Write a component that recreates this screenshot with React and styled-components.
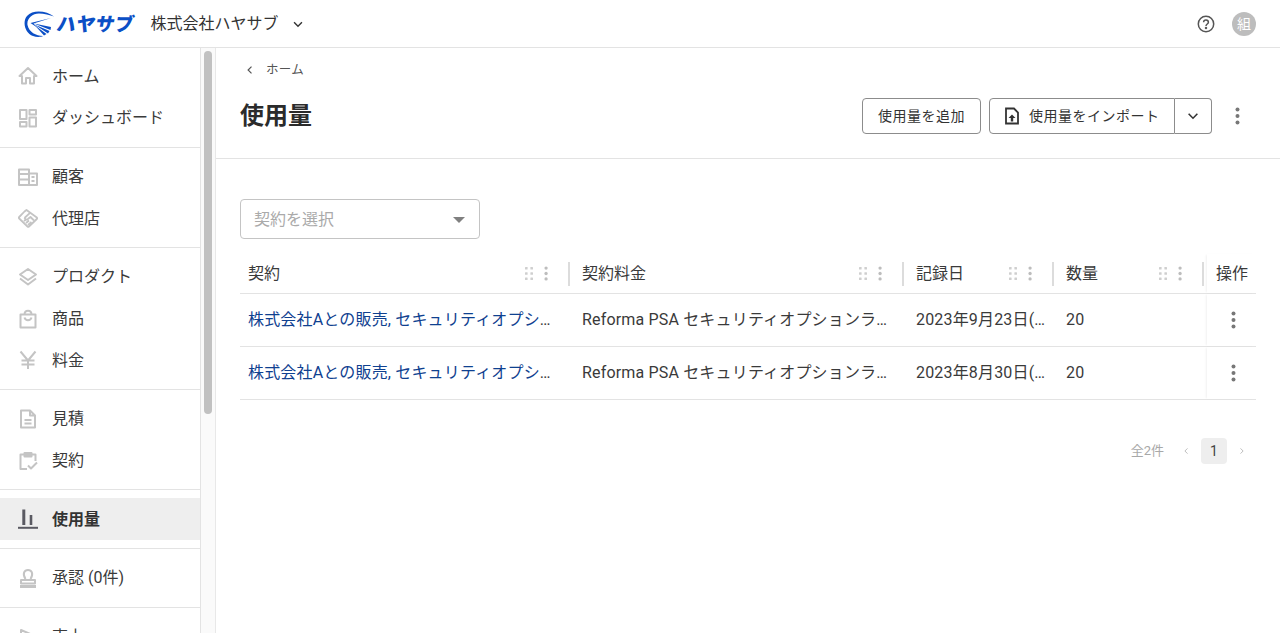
import React from 'react';
import styled, { createGlobalStyle } from 'styled-components';

const GlobalStyle = createGlobalStyle`
  html, body {
    margin: 0;
    height: 100%;
    overflow: hidden;
    background: #fff;
  }
  body {
    font-family: Roboto, "Noto Sans CJK JP", sans-serif;
    line-height: 24px;
    color: #333;
  }
  * {
    box-sizing: border-box;
  }
`;

const Page = styled.div`
  height: 633px;
  display: flex;
  flex-direction: column;
  overflow: hidden;
`;

const Header = styled.header`
  height: 48px;
  flex: none;
  display: flex;
  align-items: center;
  padding: 0 24px;
  border-bottom: 1px solid #e3e3e3;
`;

const Logo = styled.div`
  display: flex;
  align-items: center;
  color: #0b4fc6;
  width: 126.5px;
`;

const LogoText = styled.span`
  font-size: 19px;
  font-weight: 900;
  line-height: 1;
  margin: 2px 0 0 1px;
  letter-spacing: 0.3px;
  transform: skewX(-10deg);
`;

const Company = styled.div`
  display: flex;
  align-items: center;
  font-size: 16px;
  color: #333;
  gap: 12px;
`;

const HeaderRight = styled.div`
  margin-left: auto;
  display: flex;
  align-items: center;
  gap: 17px;
`;

const Avatar = styled.div`
  width: 24px;
  height: 24px;
  border-radius: 50%;
  background: #bdbdbd;
  color: #fff;
  font-size: 14px;
  display: flex;
  align-items: center;
  justify-content: center;
`;

const Body = styled.div`
  flex: 1;
  display: flex;
  min-height: 0;
`;

const Sidebar = styled.aside`
  width: 216px;
  flex: none;
  display: flex;
  border-right: 1px solid #e8e8e8;
  overflow: hidden;
`;

const Nav = styled.nav`
  width: 201px;
  flex: none;
  border-right: 1px solid #e3e3e3;
  margin-top: -0.5px;
`;

const NavGroup = styled.div`
  padding: 8px 0;
  border-bottom: 1px solid #e3e3e3;
`;

const NavItem = styled.a`
  height: 41.67px;
  display: flex;
  align-items: center;
  padding: 1px 0 0 18px;
  gap: 14px;
  font-size: 16px;
  font-weight: ${(p) => (p.$active ? 700 : 400)};
  color: ${(p) => (p.$active ? '#333' : '#3a3a3a')};
  background: ${(p) => (p.$active ? '#eeeeee' : 'transparent')};
  svg {
    color: ${(p) => (p.$active ? '#5a5a62' : '#c4c4c4')};
    flex: none;
    margin-top: -1px;
  }
`;

const ScrollTrack = styled.div`
  flex: 1;
  background: #fafafa;
  padding: 3px 3px 0 3px;
`;

const ScrollThumb = styled.div`
  height: 363px;
  border-radius: 4px;
  background: #c1c1c1;
`;

const Main = styled.main`
  flex: 1;
  min-width: 0;
`;

const PageHead = styled.div`
  height: 111px;
  padding: 12px 24px 0;
  border-bottom: 1px solid #e3e3e3;
`;

const Breadcrumb = styled.div`
  display: flex;
  align-items: center;
  height: 20px;
  gap: 10px;
  font-size: 12.5px;
  letter-spacing: 0.25px;
  color: #555;
  padding-left: 4px;
`;

const TitleRow = styled.div`
  display: flex;
  align-items: center;
  margin-top: 18px;
  height: 36px;
`;

const Title = styled.h1`
  margin: 0;
  font-size: 24px;
  font-weight: 700;
  color: #2b2b2b;
  line-height: 36px;
`;

const Actions = styled.div`
  margin-left: auto;
  display: flex;
  align-items: center;
  margin-right: 9px;
`;

const Button = styled.button`
  height: 36px;
  display: flex;
  align-items: center;
  gap: 10px;
  padding: 0 15px;
  background: #fff;
  border: 1px solid #8c8c8c;
  border-radius: 4px;
  font: inherit;
  font-size: 14px;
  letter-spacing: 0.5px;
  white-space: nowrap;
  color: #333;
`;

const ButtonGroup = styled.div`
  display: flex;
  margin-left: 8px;
`;

const ImportButton = styled(Button)`
  border-radius: 4px 0 0 4px;
  width: 186px;
  padding: 0 0 0 14px;
  gap: 9px;
`;

const CaretButton = styled(Button)`
  border-radius: 0 4px 4px 0;
  border-left: none;
  width: 37px;
  padding: 0;
  justify-content: center;
`;

const KebabBox = styled.div`
  width: 20px;
  display: flex;
  justify-content: center;
  margin-left: 15px;
`;

const Content = styled.div`
  padding: 40px 24px 0;
`;

const Select = styled.div`
  width: 240px;
  height: 40px;
  border: 1px solid #c4c4c4;
  border-radius: 4px;
  display: flex;
  align-items: center;
  justify-content: space-between;
  padding: 1px 14px 0 13px;
  font-size: 16px;
  color: #aaa;
`;

const CaretDown = styled.span`
  width: 0;
  height: 0;
  border-left: 6.5px solid transparent;
  border-right: 6.5px solid transparent;
  border-top: 6.5px solid #808080;
`;

const Table = styled.div`
  margin-top: 15px;
`;

const Row = styled.div`
  display: grid;
  grid-template-columns: 330px 334px 150px 150px 52px;
  height: ${(p) => (p.$head ? '40px' : '53px')};
  border-bottom: 1px solid #e3e3e3;
`;

const HeadCell = styled.div`
  display: flex;
  align-items: center;
  font-size: 16px;
  padding-left: ${(p) => (p.$first ? '8px' : '12px')};
  color: #3a3a3a;
`;

const HeadTools = styled.div`
  margin-left: auto;
  display: flex;
  align-items: center;
  gap: 11px;
`;

const ColumnEdge = styled.span`
  width: 2px;
  height: 24px;
  background: #dcdcdc;
  margin-left: 9px;
`;

const Cell = styled.div`
  display: block;
  min-width: 0;
  line-height: 52px;
  font-size: 16px;
  letter-spacing: 0.17px;
  color: #3a3a3a;
  padding: 0 8px 0 ${(p) => (p.$first ? '8px' : '12px')};
  white-space: nowrap;
  overflow: hidden;
  text-overflow: ellipsis;
`;

const ContractLink = styled.a`
  color: #0f4190;
`;

const ActionHead = styled.div`
  margin-left: 3px;
  display: flex;
  align-items: center;
  padding-left: 9px;
  font-size: 16px;
  color: #3a3a3a;
  box-shadow: -2px 0 2px -1px rgba(0, 0, 0, 0.06);
`;

const ActionCell = styled(ActionHead)`
  justify-content: center;
  padding-left: 4px;
`;

const Pagination = styled.div`
  display: flex;
  align-items: center;
  justify-content: flex-end;
  margin-top: 38px;
  font-size: 13px;
  color: #a8a8a8;
  height: 26px;
`;

const PageArrow = styled.span`
  width: 37px;
  display: flex;
  justify-content: center;
  color: #b5b5b5;
`;

const PrevArrow = styled(PageArrow)`
  margin-left: 3px;
`;

const NextArrow = styled(PageArrow)`
  width: 29px;
`;

const PageNumber = styled.span`
  width: 26px;
  height: 26px;
  border-radius: 4px;
  background: #eeeeee;
  color: #444;
  font-size: 14px;
  display: flex;
  align-items: center;
  justify-content: center;
  margin-left: -3px;
`;

const Icon = ({ children, size = 20, width = 2 }) => (
  <svg
    width={size}
    height={size}
    viewBox="0 0 20 20"
    fill="none"
    stroke="currentColor"
    strokeWidth={width}
    strokeLinejoin="round"
  >
    {children}
  </svg>
);

const HomeIcon = () => (
  <Icon>
    <path d="M1.5 10 10 2 18.5 10H16V17.500H12V12H8V17.500H4V10Z" />
  </Icon>
);

const DashIcon = () => (
  <Icon>
    <rect x="2" y="2" width="6.500" height="9" />
    <rect x="11.500" y="2" width="6.500" height="4.500" />
    <rect x="2" y="14" width="6.500" height="4.500" />
    <rect x="11.500" y="9.500" width="6.500" height="9" />
  </Icon>
);

const BuildingIcon = () => (
  <Icon>
    <path d="M1 2.500H11V18H1ZM11 6.500H19V18H11M1 7H11M1 12.500H11M13.500 10H16.500M13.500 14H16.500" />
  </Icon>
);

const HandshakeIcon = () => (
  <Icon width={1.800}>
    <path d="M8.500 2 18.800 9.500C19.300 10 19.300 10.500 18.800 11L11 18.500C10.500 19 10 19 9.500 18.500L1.200 10.500C0.700 10 0.700 9.500 1.200 9L6.500 3.500Z" />
    <path d="M6.500 10 12 4.800M6.500 10C7.500 12 9.500 12 10.500 10.500L12.500 9 16 12.500M6 13 8 11.500M8 15 11 12.500M10 17 13.500 14" />
  </Icon>
);

const LayersIcon = () => (
  <Icon>
    <path d="M10 2 18 7.500 10 13 2 7.500ZM2 11.500 10 17.500 18 11.500" />
  </Icon>
);

const BagIcon = () => (
  <Icon>
    <path d="M2.500 5.500H17.500V18.500H2.500ZM6.500 5.500C6.500 0.500 13.500 0.500 13.500 5.500M6.500 8.500C7.500 12 12.500 12 13.500 8.500" />
  </Icon>
);

const YenIcon = () => (
  <Icon>
    <path d="M2.500 1.500 10 10.500 17.500 1.500M10 10.500V19M3.500 10.500H16.500M3.500 14.500H16.500" />
  </Icon>
);

const DocIcon = () => (
  <Icon>
    <path d="M3 1.500H12L17 6.500V18.500H3ZM12 1.500V6.500H17M6.500 11H13.500M6.500 14.500H13.500" />
  </Icon>
);

const ClipboardIcon = () => (
  <Icon>
    <path d="M6.500 3.500H2.500V18H9M13.500 3.500H17.500V10M10 14.500 13 17.500 19 11.500" />
    <path d="M6.500 2H13.500V5.500H6.500Z" fill="currentColor" />
  </Icon>
);

const ChartIcon = () => (
  <Icon>
    <path d="M5.800 0.500V16" strokeWidth="3" />
    <path d="M13 6V16" strokeWidth="2.600" />
    <path d="M0 18.800H20" />
  </Icon>
);

const StampIcon = () => (
  <Icon>
    <path d="M7.500 11C4 5.500 6.500 2 10 2S16 5.500 12.500 11M3 12H17V15.500H3Z" />
    <path d="M2 17H18V20H2Z" fill="currentColor" stroke="none" />
  </Icon>
);

const SalesIcon = () => (
  <Icon>
    <path d="M3 3 17 9V19H3Z" />
  </Icon>
);

const LogoMark = () => (
  <svg width="32" height="28" viewBox="0 0 32 28" fill="currentColor">
    <path d="M30 6.500C23 1 9-1 3 6-2 12 1 23 9 26c4 1.500 8 1 10 0C12 26 5 22 3.500 15 2.500 9 8 3.500 15 3.500c5 0 11 1.500 15 3Z" />
    <path d="M27 8 6.500 13 14 18 9.500 13.500Z" />
    <path d="M10 13.500 27 17 26.500 20ZM10.500 14.500 25.500 21 24 23.500ZM11 15.500 22.500 24 20 25.500Z" />
  </svg>
);

const Chevron = ({ d, size = 16, width = 1.6 }) => (
  <svg width={size} height={size} viewBox="0 0 16 16" fill="none" stroke="currentColor" strokeWidth={width}>
    <path d={d} />
  </svg>
);

const HelpIcon = () => (
  <svg width="18" height="18" viewBox="0 0 18 18" fill="none" stroke="#555" strokeWidth="1.500">
    <circle cx="9" cy="9" r="7.700" />
    <path d="M6.600 7.200C6.700 4.200 11.400 4.300 11.400 7.200 11.400 9 9 9 9 11" />
    <circle cx="9" cy="13" r="0.500" fill="#555" />
  </svg>
);

const ImportIcon = () => (
  <svg width="16" height="18" viewBox="0 0 16 18" fill="none" stroke="#333" strokeWidth="1.800">
    <path d="M2 1.500H10L14 5.500V16.500H2Z" />
    <path d="M4.500 11 8 7.500 11.500 11H9.200V14.500H6.800V11Z" fill="#333" stroke="none" />
  </svg>
);

const Kebab = ({ color = '#777', size = 18 }) => (
  <svg width={size / 3.600} height={size} viewBox="0 0 5 18" fill={color}>
    <circle cx="2.500" cy="2.500" r="2" />
    <circle cx="2.500" cy="9" r="2" />
    <circle cx="2.500" cy="15.500" r="2" />
  </svg>
);

const DragDots = () => (
  <svg width="8" height="13" viewBox="0 0 8 13" fill="#cfcfcf">
    {[1.300, 6.500, 11.700].map((y) => (
      <React.Fragment key={y}>
        <rect x="0" y={y - 1.300} width="2.600" height="2.600" rx="0.500" />
        <rect x="5.400" y={y - 1.300} width="2.600" height="2.600" rx="0.500" />
      </React.Fragment>
    ))}
  </svg>
);

const navGroups = [
  [
    { label: 'ホーム', icon: HomeIcon },
    { label: 'ダッシュボード', icon: DashIcon },
  ],
  [
    { label: '顧客', icon: BuildingIcon },
    { label: '代理店', icon: HandshakeIcon },
  ],
  [
    { label: 'プロダクト', icon: LayersIcon },
    { label: '商品', icon: BagIcon },
    { label: '料金', icon: YenIcon },
  ],
  [
    { label: '見積', icon: DocIcon },
    { label: '契約', icon: ClipboardIcon },
  ],
  [{ label: '使用量', icon: ChartIcon, active: true }],
  [{ label: '承認 (0件)', icon: StampIcon }],
  [{ label: '売上', icon: SalesIcon }],
];

const columns = ['契約', '契約料金', '記録日', '数量'];

const rows = [
  { date: '2023年9月23日(土)' },
  { date: '2023年8月30日(水)' },
];

const App = () => (
  <Page>
    <GlobalStyle />
    <Header>
      <Logo>
        <LogoMark />
        <LogoText>ハヤサブ</LogoText>
      </Logo>
      <Company>
        株式会社ハヤサブ
        <Chevron d="M3.500 6 8 10.500 12.500 6" size={14} />
      </Company>
      <HeaderRight>
        <HelpIcon />
        <Avatar>組</Avatar>
      </HeaderRight>
    </Header>
    <Body>
      <Sidebar>
        <Nav>
          {navGroups.map((group, i) => (
            <NavGroup key={i}>
              {group.map(({ label, icon: NavIcon, active }) => (
                <NavItem key={label} $active={active}>
                  <NavIcon />
                  {label}
                </NavItem>
              ))}
            </NavGroup>
          ))}
        </Nav>
        <ScrollTrack>
          <ScrollThumb />
        </ScrollTrack>
      </Sidebar>
      <Main>
        <PageHead>
          <Breadcrumb>
            <Chevron d="M10 3.500 5.500 8 10 12.500" size={12} />
            ホーム
          </Breadcrumb>
          <TitleRow>
            <Title>使用量</Title>
            <Actions>
              <Button>使用量を追加</Button>
              <ButtonGroup>
                <ImportButton>
                  <ImportIcon />
                  使用量をインポート
                </ImportButton>
                <CaretButton>
                  <Chevron d="M3 5.500 8 10.500 13 5.500" size={14} width={1.800} />
                </CaretButton>
              </ButtonGroup>
              <KebabBox>
                <Kebab />
              </KebabBox>
            </Actions>
          </TitleRow>
        </PageHead>
        <Content>
          <Select>
            契約を選択
            <CaretDown />
          </Select>
          <Table>
            <Row $head>
              {columns.map((col, i) => (
                <HeadCell key={col} $first={i === 0}>
                  {col}
                  <HeadTools>
                    <DragDots />
                    <Kebab color="#bdbdbd" size={15} />
                    <ColumnEdge />
                  </HeadTools>
                </HeadCell>
              ))}
              <ActionHead>操作</ActionHead>
            </Row>
            {rows.map((row) => (
              <Row key={row.date}>
                <Cell $first>
                  <ContractLink>株式会社Aとの販売, セキュリティオプションライセンス</ContractLink>
                </Cell>
                <Cell>Reforma PSA セキュリティオプションライセンス</Cell>
                <Cell>{row.date}</Cell>
                <Cell>20</Cell>
                <ActionCell>
                  <Kebab />
                </ActionCell>
              </Row>
            ))}
          </Table>
          <Pagination>
            全2件
            <PrevArrow>
              <Chevron d="M10 4.500 6.500 8 10 11.500" size={12} width={1.200} />
            </PrevArrow>
            <PageNumber>1</PageNumber>
            <NextArrow>
              <Chevron d="M6 4.500 9.500 8 6 11.500" size={12} width={1.200} />
            </NextArrow>
          </Pagination>
        </Content>
      </Main>
    </Body>
  </Page>
);

export default App;
